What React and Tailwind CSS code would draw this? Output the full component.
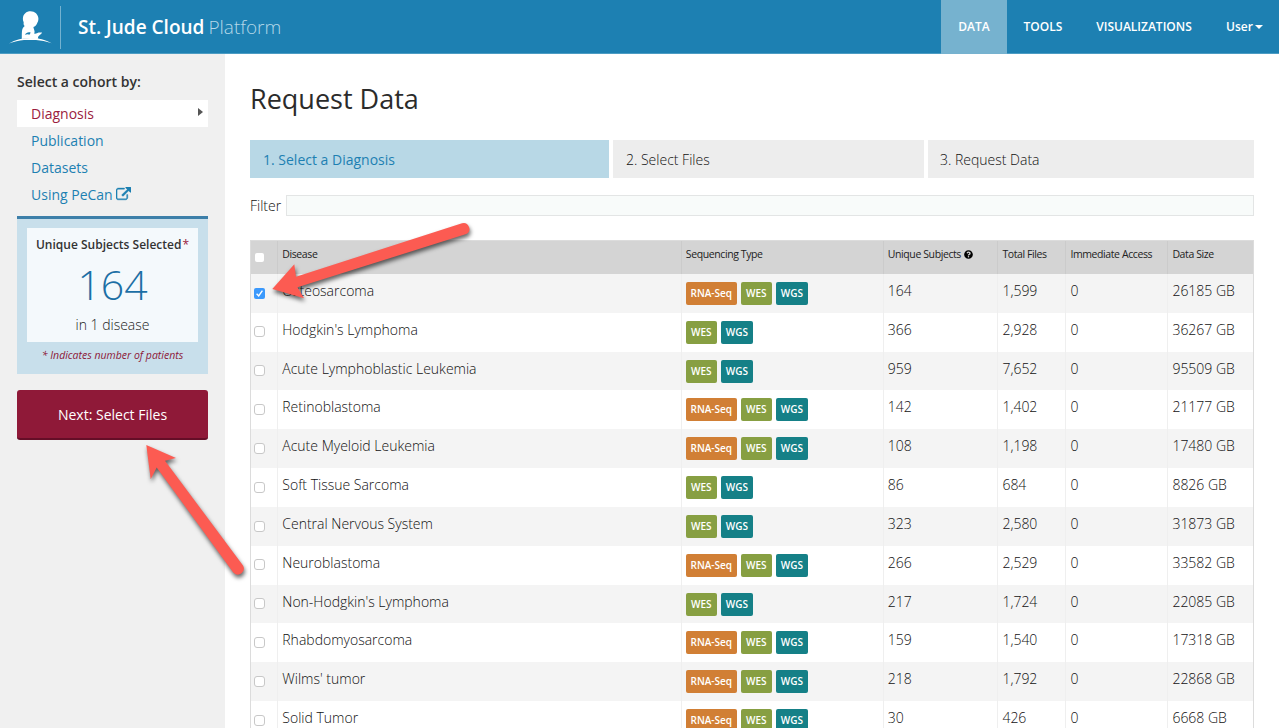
import React from "react";
import { FaQuestionCircle } from "react-icons/fa";

const ROWS = [
  ["Osteosarcoma", true, "164", "1,599", "0", "26185 GB"],
  ["Hodgkin's Lymphoma", false, "366", "2,928", "0", "36267 GB"],
  ["Acute Lymphoblastic Leukemia", false, "959", "7,652", "0", "95509 GB"],
  ["Retinoblastoma", true, "142", "1,402", "0", "21177 GB"],
  ["Acute Myeloid Leukemia", true, "108", "1,198", "0", "17480 GB"],
  ["Soft Tissue Sarcoma", false, "86", "684", "0", "8826 GB"],
  ["Central Nervous System", false, "323", "2,580", "0", "31873 GB"],
  ["Neuroblastoma", true, "266", "2,529", "0", "33582 GB"],
  ["Non-Hodgkin's Lymphoma", false, "217", "1,724", "0", "22085 GB"],
  ["Rhabdomyosarcoma", true, "159", "1,540", "0", "17318 GB"],
  ["Wilms' tumor", true, "218", "1,792", "0", "22868 GB"],
  ["Solid Tumor", true, "30", "426", "0", "6668 GB"],
];

const COLS = "grid grid-cols-[26.3px_403.5px_202px_114.6px_68px_102px_85.6px]";

function Logo() {
  return (
    <svg className="h-[54px] w-[60px] shrink-0" viewBox="0 0 60 54" fill="#fff">
      <path d="M30.500 11.300C34.800 11.300 38.300 14.400 38.400 18.600 38.500 21 37.700 22.300 36.900 23.700 36.300 25.300 35.200 26.300 33.400 26.900 33.600 28.500 34.600 30.300 34.600 32L34.200 33.400C35 34.200 36 33.500 37.500 32.900 39 32.500 40.600 32.700 42 32.600 42.200 33.400 40.700 34.300 39.500 35.200 38.300 36.100 37.600 37 38.300 38.700L35.500 39.200C31 38 26 38 21.800 38.900 21.900 36 21.700 33.500 22 31 22.200 28.800 23.300 27.300 24.700 26.100 23.400 24.600 23.500 23.700 23.700 22.400 23.200 21 22.800 19.900 22.900 18.300 23.200 14 26.400 11.300 30.500 11.300Z" />
      <path d="M24.900 34.800C26 32.700 28.500 31.800 30.600 32.600 30.700 33.400 29.800 34 29.400 34.800 28.400 33.900 26.600 34.100 24.900 34.800Z" fill="#1d80b2" />
      <path d="M9 43.500C21 36.200 40 36.200 51.600 43.200 46 41.200 41 40.400 36 39.900H24C19 40.500 14 41.600 9 43.500Z" />
    </svg>
  );
}

function ExternalLink() {
  return (
    <svg className="ml-[3px] h-[15px] w-[15px]" viewBox="0 0 1792 1792" fill="currentColor" stroke="currentColor" strokeWidth="50">
      <path d="M1408 928v320q0 119-84.500 203.500t-203.500 84.500h-832q-119 0-203.500-84.500t-84.500-203.500v-832q0-119 84.500-203.500t203.500-84.500h704q14 0 23 9t9 23v64q0 14-9 23t-23 9h-704q-66 0-113 47t-47 113v832q0 66 47 113t113 47h832q66 0 113-47t47-113v-320q0-14 9-23t23-9h64q14 0 23 9t9 23zm384-864v512q0 26-19 45t-45 19-45-19l-176-176-652 652q-10 10-23 10t-23-10l-114-114q-10-10-10-23t10-23l652-652-176-176q-19-19-19-45t19-45 45-19h512q26 0 45 19t19 45z" />
    </svg>
  );
}

function Checkbox({ checked }) {
  if (checked) {
    return (
      <span className="flex h-[11px] w-[11px] items-center justify-center rounded-[2px] bg-[#3b99fc]">
        <svg className="h-[9px] w-[9px]" viewBox="0 0 9 9" fill="none" stroke="#fff" strokeWidth="1.4">
          <path d="M1.600 4.700 3.700 7 7.400 1.600" />
        </svg>
      </span>
    );
  }
  return <span className="block h-[11px] w-[11px] rounded-[3px] border border-[#c8c8c8] bg-white" />;
}

function Tag({ color, children }) {
  return (
    <span className={`flex h-[23px] items-center justify-center rounded-[2px] text-[10px] font-semibold text-white ${color}`}>
      {children}
    </span>
  );
}

function Row({ row, index }) {
  const [name, rna, subjects, files, access, size] = row;
  const cell = "border-l border-[#efefef] pl-[4px] pt-[6px] leading-[22px]";
  return (
    <div className={`${COLS} h-[38.83px] text-[14px] font-light text-[#111] ${index % 2 === 0 ? "bg-[#f4f4f4]" : "bg-white"}`}>
      <div className="pl-[3px] pt-[13.600px]"><Checkbox checked={index === 0} /></div>
      <div className={cell}>{name}</div>
      <div className="flex gap-[4px] border-l border-[#efefef] pl-[4px] pt-[8px]">
        {rna && <Tag color="w-[51px] bg-[#d17f35]">RNA-Seq</Tag>}
        <Tag color="w-[31px] bg-[#879f42]">WES</Tag>
        <Tag color="w-[32px] bg-[#158087]">WGS</Tag>
      </div>
      <div className={cell}>{subjects}</div>
      <div className={cell}>{files}</div>
      <div className={cell}>{access}</div>
      <div className={cell}>{size}</div>
    </div>
  );
}

function Header() {
  return (
    <header className="flex h-[54px] shrink-0 border-b border-[#4c9cc3] bg-[#1d80b2] text-white">
      <Logo />
      <div className="mt-[6px] h-[43px] w-px bg-[#74b2d0]" />
      <div className="ml-[17px] flex items-baseline gap-[4px] pt-[14px] text-[19px] leading-[26px]">
        <span className="font-semibold">St. Jude Cloud</span>
        <span className="font-light text-[#b4d8e9]">Platform</span>
      </div>
      <nav className="ml-auto flex text-[12px] font-semibold leading-[54px]">
        <a className="h-[54px] w-[66px] bg-[#76b2cf] text-center">DATA</a>
        <a className="w-[72px] text-center">TOOLS</a>
        <a className="w-[130px] text-center">VISUALIZATIONS</a>
        <a className="flex h-[54px] w-[70px] items-center pl-[17px]">
          User
          <span className="ml-[2px] border-x-[4px] border-t-[4px] border-x-transparent border-t-white" />
        </a>
      </nav>
    </header>
  );
}

function Sidebar() {
  const link = "flex h-[27px] items-center pl-[14px] text-[14px] text-[#1d80b2]";
  return (
    <aside className="w-[225px] shrink-0 bg-[#f0f0f0] pl-[17px] pr-[17px] pt-[17px]">
      <h2 className="h-[29px] text-[14px] font-semibold leading-[22px] text-[#333]">Select a cohort by:</h2>
      <nav>
        <a className="flex h-[27px] items-center bg-white pl-[14px] pr-[5px] text-[14px] text-[#9b1c40]">
          Diagnosis
          <span className="mb-[3px] ml-auto border-y-[4px] border-l-[5px] border-y-transparent border-l-[#555]" />
        </a>
        <a className={link}>Publication</a>
        <a className={link}>Datasets</a>
        <a className={link}>Using PeCan<ExternalLink /></a>
      </nav>
      <section className="mt-[8px] h-[158px] border-t-[3px] border-[#3d7fa9] bg-[#c8dfeb] px-[10px] pt-[9px] text-center">
        <div className="h-[114px] bg-[#f4f9fc]">
          <div className="whitespace-nowrap pt-[8px] text-[12px] font-semibold leading-[18px] text-[#333]">
            Unique Subjects Selected<span className="ml-px font-normal text-[#9b1c40]">*</span>
          </div>
          <div className="h-[60px] text-[41px] font-light leading-[60px] text-[#1c6fa5]">164</div>
          <div className="text-[14px] font-light leading-[22px] text-[#222]">in 1 disease</div>
        </div>
        <div className="whitespace-nowrap text-[10.500px] italic leading-[26px] text-[#8d1838]">* Indicates number of patients</div>
      </section>
      <button className="mt-[16px] block h-[50px] w-[191px] rounded-[3px] border-b-2 border-[#650e27] bg-[#8f1938] text-[14px] text-white">
        Next: Select Files
      </button>
    </aside>
  );
}

function Arrows() {
  return (
    <svg
      className="pointer-events-none absolute left-0 top-0 h-[728px] w-[1279px] drop-shadow-[1px_3px_2px_rgba(0,0,0,0.6)]"
      viewBox="0 0 1279 728"
      fill="#fc5b52"
    >
      <path d="M272.300 289 294.300 264.300 296 276.700 462 223.300Q467 222 469 227T465.500 234.300L297.500 287.300 304 298.300Z" />
      <path d="M146.300 445 176 458 165 460.700 243 565.500Q245.500 570 241.500 573.300T233.300 572.500L156.700 467.500 150.700 479.300Z" />
    </svg>
  );
}

export default function App() {
  const head = "border-l border-[#cbcbcb] pl-[4px]";
  const step = "flex h-[38px] items-center";
  return (
    <div className="relative flex h-[728px] w-[1279px] flex-col overflow-hidden bg-white font-['Open_Sans',sans-serif]">
      <Header />
      <div className="flex min-h-0 flex-1">
        <Sidebar />
        <main className="w-[1029px] pl-[25px] pt-[26px]">
          <h1 className="h-[60px] text-[27px] leading-[38px] text-[#2b2b2b]">Request Data</h1>
          <div className="flex gap-[4px] text-[14px] text-[#111]">
            <div className={`${step} w-[359px] bg-[#b8d8e6] pl-[13px] text-[#1d80b2]`}>1. Select a Diagnosis</div>
            <div className={`${step} w-[311px] bg-[#ededed] pl-[13px] font-light`}>2. Select Files</div>
            <div className={`${step} w-[326px] bg-[#ededed] pl-[12px] font-light`}>3. Request Data</div>
          </div>
          <div className="mt-[17px] flex h-[21px] items-center text-[14px] font-light text-[#111]">
            <label className="w-[36px]">Filter</label>
            <div className="h-[21px] w-[968px] border border-[#e3e5e5] bg-[#f8fbfa]" />
          </div>
          <div className="mt-[24px] w-[1004px] border border-[#dcdcdc]">
            <div className={`${COLS} h-[33px] bg-[#d4d4d4] text-[10.500px] leading-[27px] tracking-[-0.4px] text-[#222]`}>
              <div className="pl-[4px] pt-[12px]">
                <span className="block h-[9px] w-[9px] rounded-[2px] bg-white" />
              </div>
              <div className={head}>Disease</div>
              <div className={head}>Sequencing Type</div>
              <div className={`${head} flex`}>
                Unique Subjects
                <FaQuestionCircle className="ml-[3px] mt-[9px] h-[9px] w-[9px] text-black" />
              </div>
              <div className={head}>Total Files</div>
              <div className={head}>Immediate Access</div>
              <div className={head}>Data Size</div>
            </div>
            {ROWS.map((row, i) => <Row key={row[0]} row={row} index={i} />)}
          </div>
        </main>
      </div>
      <Arrows />
    </div>
  );
}
